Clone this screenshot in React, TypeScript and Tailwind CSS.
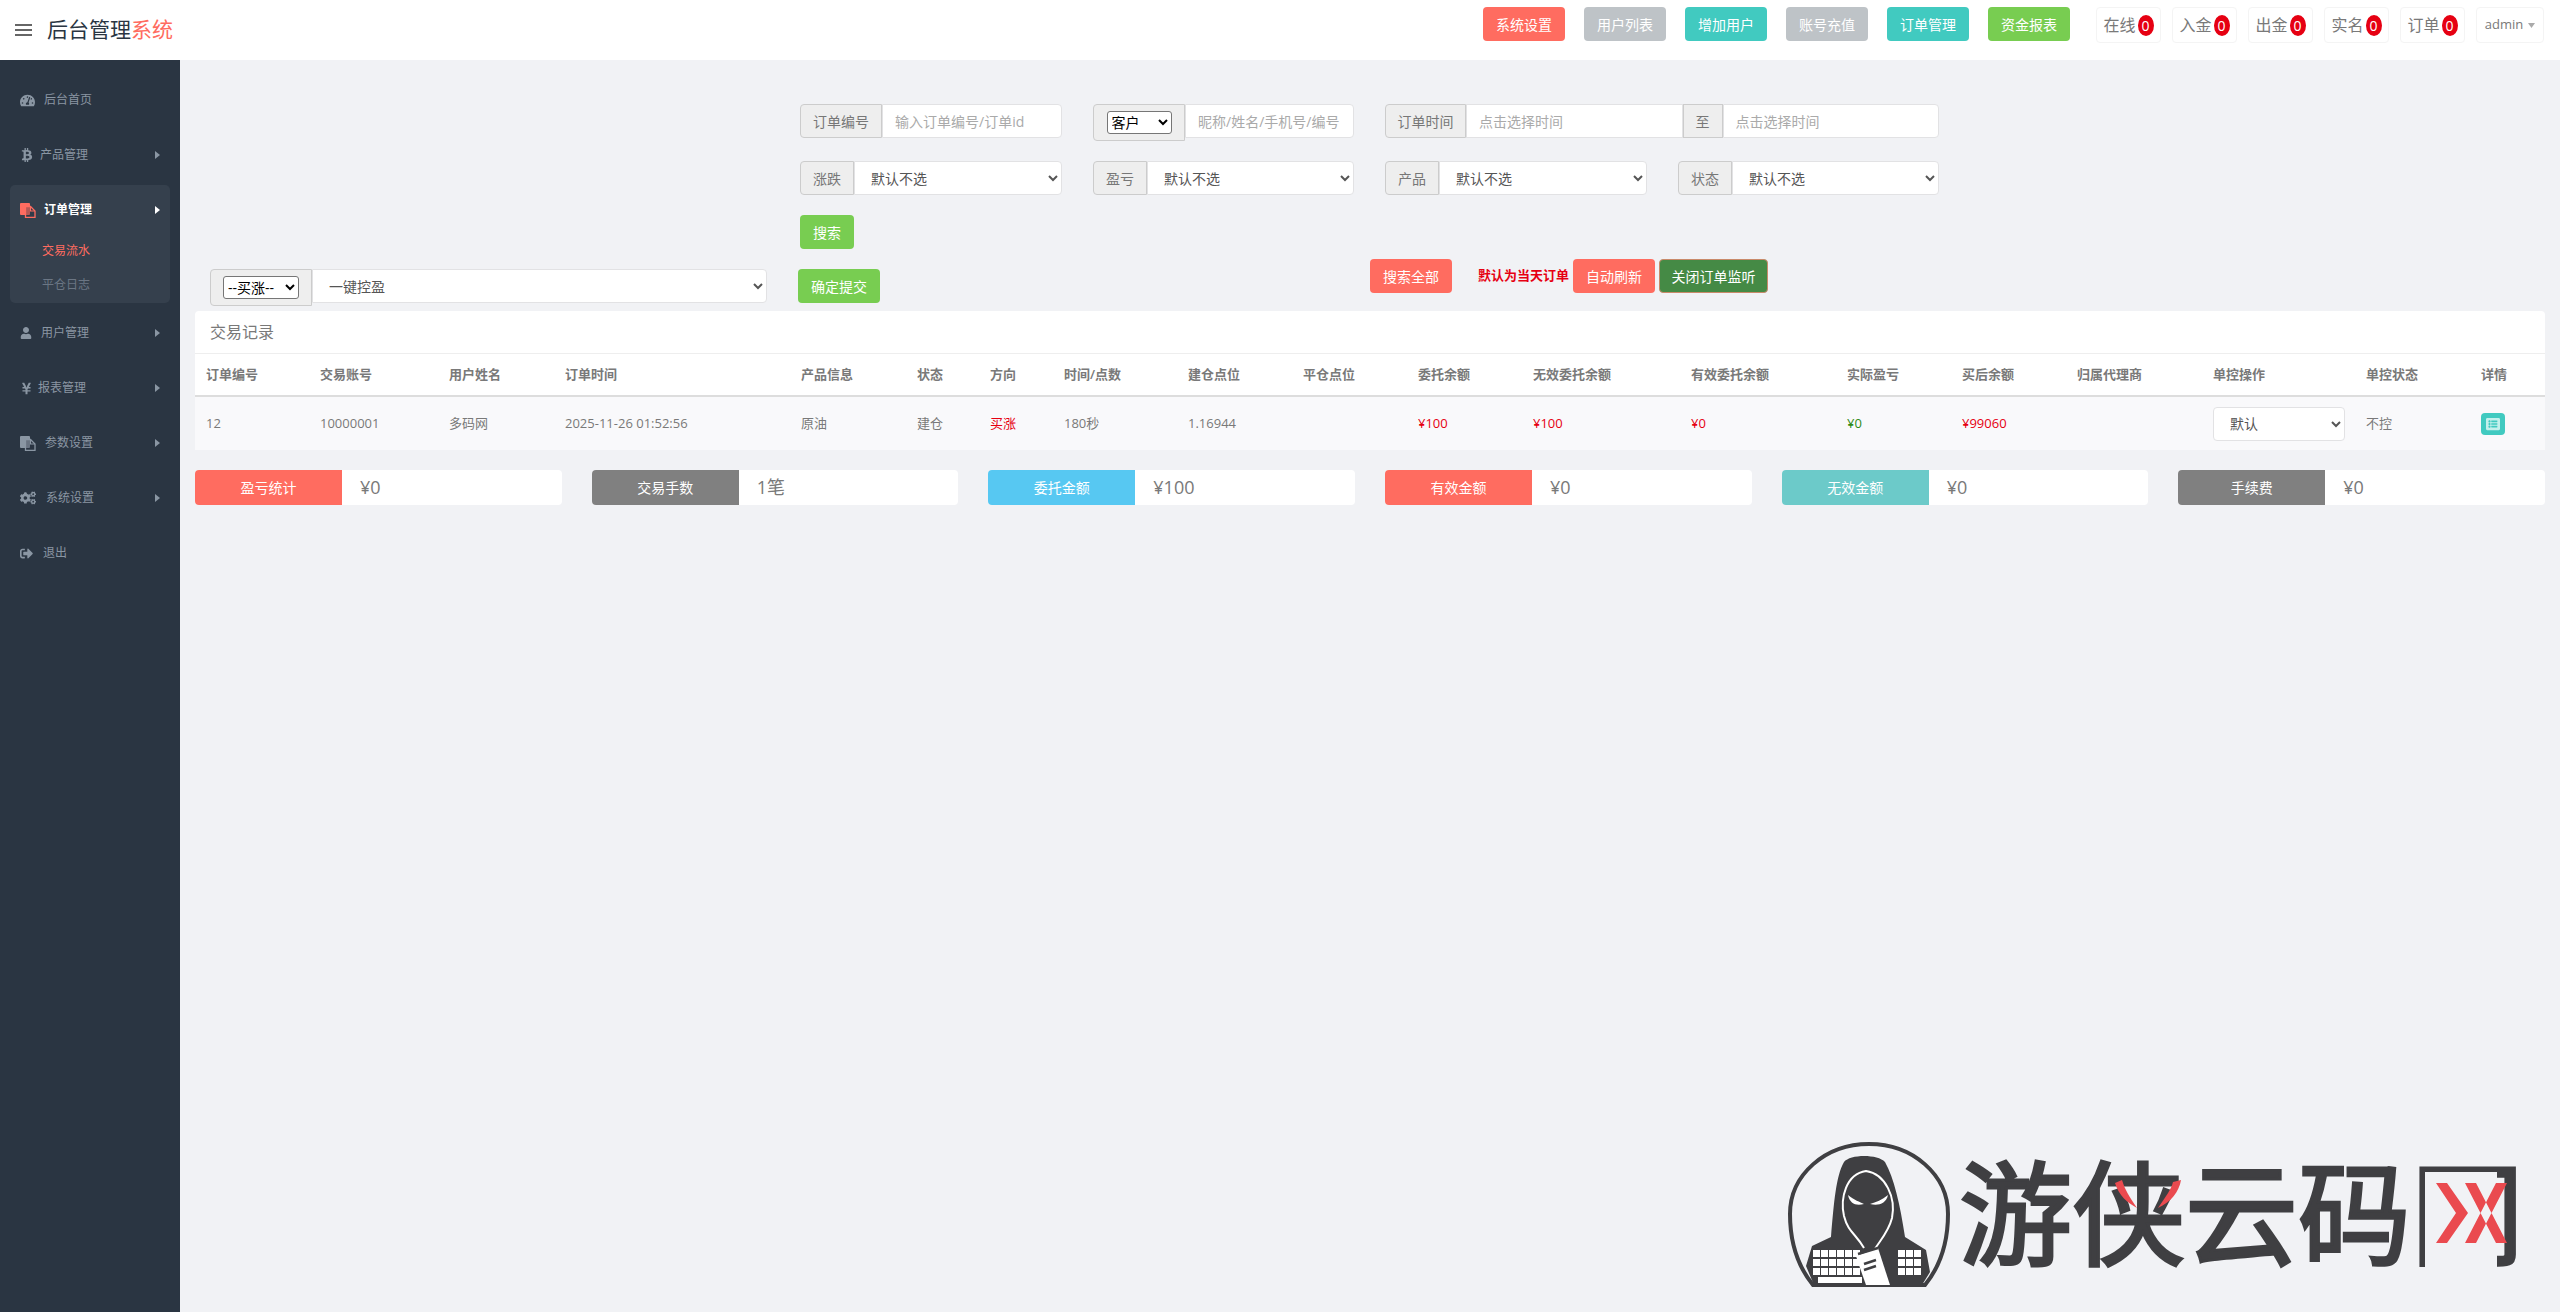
import type { ReactNode } from 'react';
import {
  FaTachometerAlt,
  FaBtc,
  FaUser,
  FaYenSign,
  FaCogs,
  FaSignOutAlt,
  FaListAlt,
} from 'react-icons/fa';

const topButtons = [
  { label: '系统设置', cls: 'bg-[#ff6c60]' },
  { label: '用户列表', cls: 'bg-[#bec3c7]' },
  { label: '增加用户', cls: 'bg-[#41cac0]' },
  { label: '账号充值', cls: 'bg-[#bec3c7]' },
  { label: '订单管理', cls: 'bg-[#41cac0]' },
  { label: '资金报表', cls: 'bg-[#78cd51]' },
];

const topStats = ['在线', '入金', '出金', '实名', '订单'];

const columns = [
  { label: '订单编号', w: 'w-[114px]', value: '12' },
  { label: '交易账号', w: 'w-[129px]', value: '10000001' },
  { label: '用户姓名', w: 'w-[116px]', value: '多码网' },
  { label: '订单时间', w: 'w-[236px]', value: '2025-11-26 01:52:56' },
  { label: '产品信息', w: 'w-[116px]', value: '原油' },
  { label: '状态', w: 'w-[73px]', value: '建仓' },
  { label: '方向', w: 'w-[74px]', value: '买涨', cls: 'text-[#e60012]' },
  { label: '时间/点数', w: 'w-[124px]', value: '180秒' },
  { label: '建仓点位', w: 'w-[115px]', value: '1.16944' },
  { label: '平仓点位', w: 'w-[115px]', value: '' },
  { label: '委托余额', w: 'w-[115px]', value: '¥100', cls: 'text-[#e60012]' },
  { label: '无效委托余额', w: 'w-[158px]', value: '¥100', cls: 'text-[#e60012]' },
  { label: '有效委托余额', w: 'w-[156px]', value: '¥0', cls: 'text-[#e60012]' },
  { label: '实际盈亏', w: 'w-[115px]', value: '¥0', cls: 'text-[#2e8b16]' },
  { label: '买后余额', w: 'w-[115px]', value: '¥99060', cls: 'text-[#e60012]' },
  { label: '归属代理商', w: 'w-[136px]', value: '' },
];

const summary = [
  { label: '盈亏统计', value: '¥0', cls: 'bg-[#ff6c60]' },
  { label: '交易手数', value: '1笔', cls: 'bg-[#808080]' },
  { label: '委托金额', value: '¥100', cls: 'bg-[#57c8f2]' },
  { label: '有效金额', value: '¥0', cls: 'bg-[#ff6c60]' },
  { label: '无效金额', value: '¥0', cls: 'bg-[#6ccac9]' },
  { label: '手续费', value: '¥0', cls: 'bg-[#808080]' },
];

function Caret({ active }: { active?: boolean }) {
  return (
    <svg width="5" height="8" viewBox="0 0 5 8" className="ml-auto mr-[10px]">
      <polygon points="0,0 5,4 0,8" fill={active ? '#ffffff' : '#8a96a3'} />
    </svg>
  );
}

// solid page behind an outlined page with a folded corner
function PagesIcon({ back, front }: { back: string; front: string }) {
  return (
    <svg width="16" height="15" viewBox="0 0 16 15">
      <rect x="0" y="0" width="10" height="12" rx="1" fill={back} />
      <path d="M5.5 3.5 H10.5 L15 8 V14.3 H5.5 Z" fill="#2a3542" fillOpacity="0.35" stroke={front} strokeWidth="1.3" />
      <path d="M10.5 3.5 V8 H15" fill="none" stroke={front} strokeWidth="1.1" />
    </svg>
  );
}

function NavItem({ icon, iconWidth, label, arrow = true }: { icon: ReactNode; iconWidth: string; label: string; arrow?: boolean }) {
  return (
    <div className="mx-[10px] flex h-[50px] items-center pl-[10px] text-[12px] text-[#8a96a3]">
      <span className={`${iconWidth} flex shrink-0 items-center`}>{icon}</span>
      <span>{label}</span>
      {arrow && <Caret />}
    </div>
  );
}

function Sidebar() {
  return (
    <aside className="flex w-[180px] shrink-0 flex-col gap-[5px] bg-[#2a3542] pt-[15px]">
      <NavItem icon={<FaTachometerAlt size={15} />} iconWidth="w-[24px]" label="后台首页" arrow={false} />
      <NavItem icon={<FaBtc size={14} />} iconWidth="w-[20px]" label="产品管理" />
      <div className="mx-[10px] h-[118px] rounded-[5px] bg-[#35404d]">
        <div className="flex h-[50px] items-center pl-[10px] text-[12px] font-bold text-white">
          <span className="flex w-[24px] shrink-0 items-center">
            <PagesIcon back="#ff6c60" front="#ff6c60" />
          </span>
          <span>订单管理</span>
          <Caret active />
        </div>
        <div className="-mt-[1px] flex h-[34px] items-center pl-[32px] text-[12px] text-[#ff6c60]">交易流水</div>
        <div className="flex h-[34px] items-center pl-[32px] text-[12px] text-[#6b7684]">平仓日志</div>
      </div>
      <NavItem icon={<FaUser size={12} />} iconWidth="w-[21px]" label="用户管理" />
      <NavItem icon={<FaYenSign size={13} />} iconWidth="w-[18px]" label="报表管理" />
      <NavItem icon={<PagesIcon back="#8a96a3" front="#8a96a3" />} iconWidth="w-[25px]" label="参数设置" />
      <NavItem icon={<FaCogs size={16} />} iconWidth="w-[26px]" label="系统设置" />
      <NavItem icon={<FaSignOutAlt size={13} />} iconWidth="w-[23px]" label="退出" arrow={false} />
    </aside>
  );
}

function TopBar() {
  return (
    <header className="flex h-[60px] shrink-0 items-start bg-white">
      <div className="flex h-[60px] items-center pl-[15px]">
        <div className="flex w-[17px] flex-col gap-[3px]">
          <span className="h-[2px] bg-[#666]" />
          <span className="h-[2px] bg-[#666]" />
          <span className="h-[2px] bg-[#666]" />
        </div>
        <div className="ml-[15px] text-[21px] text-[#2a3542]">
          后台管理<span className="text-[#ff6c60]">系统</span>
        </div>
      </div>
      <div className="ml-auto flex pr-[16px] pt-[7px]">
        <div className="flex gap-[19px]">
          {topButtons.map((b) => (
            <div key={b.label} className={`${b.cls} flex h-[34px] w-[82px] items-center justify-center rounded-[4px] text-[14px] text-white`}>
              {b.label}
            </div>
          ))}
        </div>
        <div className="ml-[26px] flex gap-[11px]">
          {topStats.map((s) => (
            <div key={s} className="flex h-[36px] w-[65px] items-center justify-center gap-[2px] rounded-[4px] border border-[#f4f4f4] text-[16px] text-[#797979]">
              {s}
              <span className="flex h-[21px] w-[16px] items-center justify-center rounded-[50%] bg-[#e60012] text-[14px] text-white">0</span>
            </div>
          ))}
          <div className="flex h-[36px] w-[68px] items-center justify-center gap-[5px] rounded-[4px] border border-[#f4f4f4] text-[13px] text-[#797979]">
            admin
            <svg width="7" height="5" viewBox="0 0 7 5">
              <polygon points="0,0 7,0 3.5,5" fill="#aaaaaa" />
            </svg>
          </div>
        </div>
      </div>
    </header>
  );
}

function Addon({ children, w }: { children: ReactNode; w: string }) {
  return (
    <span className={`${w} flex h-[34px] shrink-0 items-center justify-center rounded-l-[4px] border border-[#cccccc] bg-[#eeeeee] text-[14px] text-[#777777]`}>
      {children}
    </span>
  );
}

function TextField({ placeholder, last = true }: { placeholder: string; last?: boolean }) {
  return (
    <input
      placeholder={placeholder}
      className={`h-[34px] min-w-0 flex-1 border border-[#e2e2e4] bg-white pl-3 text-[14px] outline-none placeholder:text-[#aaaaaa] ${last ? 'rounded-r-[4px]' : ''}`}
    />
  );
}

function SelectGroup({ label, width }: { label: string; width: string }) {
  return (
    <div className={`${width} flex`}>
      <Addon w="w-[54px]">{label}</Addon>
      <select className="h-[34px] min-w-0 flex-1 rounded-r-[4px] border border-[#e2e2e4] bg-white pl-3 text-[14px] text-[#555555]">
        <option>默认不选</option>
      </select>
    </div>
  );
}

function Filters() {
  return (
    <div className="ml-[620px] w-[1139px]">
      <div className="flex h-[34px] items-start gap-[31px]">
        <div className="flex w-[262px]">
          <Addon w="w-[82px]">订单编号</Addon>
          <TextField placeholder="输入订单编号/订单id" />
        </div>
        <div className="flex w-[261px] items-start">
          <span className="flex h-[37px] w-[92px] shrink-0 items-center justify-center rounded-l-[4px] border border-[#cccccc] bg-[#eeeeee]">
            <select className="h-[23px] w-[65px] rounded-[3px] border border-[#767676] bg-white text-[14px] text-black">
              <option>客户</option>
            </select>
          </span>
          <TextField placeholder="昵称/姓名/手机号/编号" />
        </div>
        <div className="flex w-[554px]">
          <Addon w="w-[81px]">订单时间</Addon>
          <TextField placeholder="点击选择时间" last={false} />
          <Addon w="w-[40px] rounded-l-none">至</Addon>
          <TextField placeholder="点击选择时间" />
        </div>
      </div>
      <div className="mt-[23px] flex gap-[31px]">
        <SelectGroup label="涨跌" width="w-[262px]" />
        <SelectGroup label="盈亏" width="w-[261px]" />
        <SelectGroup label="产品" width="w-[262px]" />
        <SelectGroup label="状态" width="w-[261px]" />
      </div>
      <div className="mt-[20px] flex h-[34px] w-[54px] items-center justify-center rounded-[4px] bg-[#78cd51] text-[14px] text-white">搜索</div>
    </div>
  );
}

function ActionRow() {
  return (
    <div className="flex h-[62px] items-start pl-[30px] pt-[20px]">
      <div className="flex w-[557px] items-start">
        <span className="flex h-[37px] w-[102px] shrink-0 items-center justify-center rounded-l-[4px] border border-[#cccccc] bg-[#eeeeee]">
          <select className="h-[23px] w-[76px] rounded-[3px] border border-[#767676] bg-white text-[14px] text-black">
            <option>--买涨--</option>
          </select>
        </span>
        <select className="h-[34px] min-w-0 flex-1 rounded-r-[4px] border border-[#e2e2e4] bg-white pl-3 text-[14px] text-[#555555]">
          <option>一键控盈</option>
        </select>
      </div>
      <div className="ml-[31px] flex h-[34px] w-[82px] items-center justify-center rounded-[4px] bg-[#78cd51] text-[14px] text-white">确定提交</div>
      <div className="-mt-[10px] ml-[490px] flex h-[34px] w-[82px] items-center justify-center rounded-[4px] bg-[#ff6c60] text-[14px] text-white">搜索全部</div>
      <div className="-mt-[10px] ml-[26px] flex h-[34px] items-center text-[13px] font-bold text-[#e60012]">默认为当天订单</div>
      <div className="-mt-[10px] ml-[4px] flex h-[34px] w-[82px] items-center justify-center rounded-[4px] bg-[#ff6c60] text-[14px] text-white">自动刷新</div>
      <div className="-mt-[10px] ml-[4px] flex h-[34px] w-[109px] items-center justify-center rounded-[4px] border border-[#c98a6a] bg-[#458a45] text-[14px] text-white">关闭订单监听</div>
    </div>
  );
}

function Records() {
  return (
    <section className="mx-[15px] rounded-[4px] bg-white">
      <div className="flex h-[43px] items-center border-b border-[#eeeeee] pl-[15px] text-[16px] text-[#797979]">交易记录</div>
      <table className="w-[2350px] table-fixed border-collapse text-left text-[13px] text-[#797979]">
        <thead>
          <tr className="h-[42px] border-b-2 border-[#dddddd]">
            {columns.map((c) => (
              <th key={c.label} className={`${c.w} whitespace-nowrap pl-[11px] font-semibold`}>{c.label}</th>
            ))}
            <th className="w-[153px] pl-[11px] font-semibold">单控操作</th>
            <th className="w-[115px] pl-[11px] font-semibold">单控状态</th>
            <th className="w-[75px] pl-[11px] font-semibold">详情</th>
          </tr>
        </thead>
        <tbody>
          <tr className="h-[54px] bg-[#f9f9fb]">
            {columns.map((c) => (
              <td key={c.label} className={`whitespace-nowrap pl-[11px] ${c.cls ?? ''}`}>{c.value}</td>
            ))}
            <td className="pl-[11px]">
              <select className="h-[34px] w-[132px] rounded-[4px] border border-[#e2e2e4] bg-white pl-3 text-[14px] text-[#555555]">
                <option>默认</option>
              </select>
            </td>
            <td className="pl-[11px]">不控</td>
            <td className="pl-[11px]">
              <span className="flex h-[22px] w-[24px] items-center justify-center rounded-[4px] bg-[#41cac0] text-[#c4f0ec]">
                <FaListAlt size={14} />
              </span>
            </td>
          </tr>
        </tbody>
      </table>
    </section>
  );
}

function Summary() {
  return (
    <div className="mx-[15px] mt-[20px] grid grid-cols-6 gap-[30px]">
      {summary.map((s) => (
        <div key={s.label} className="flex h-[35px] rounded-[4px] bg-white">
          <div className={`${s.cls} flex w-[147px] items-center justify-center rounded-l-[4px] text-[14px] text-white`}>{s.label}</div>
          <div className="flex items-center pl-[18px] text-[18px] text-[#797979]">{s.value}</div>
        </div>
      ))}
    </div>
  );
}

function Watermark() {
  return (
    <div className="absolute left-[1608px] top-[1082px] flex items-start">
      <svg width="166" height="146" viewBox="0 0 166 146" className="shrink-0">
        <path d="M25 143 C8 122 2 98 2 72 C2 33 37 2 81 2 C125 2 160 33 160 72 C160 98 154 122 137 143 Z" fill="none" stroke="#3f3f42" strokeWidth="4" />
        <path d="M43 95 C46 60 48 34 56 20 C62 12 90 12 97 20 C106 36 112 62 117 95 L138 108 L142 130 L134 143 L26 143 L18 124 L24 104 Z" fill="#3f3f42" />
        <path d="M56 74 C52 56 58 32 78 29 C98 32 108 56 104 76 C100 92 90 100 84 112 M56 74 C60 90 68 92 76 106" fill="none" stroke="#ffffff" strokeWidth="2" />
        <path d="M60 53 C66 58 72 60 76 62 C68 64 62 62 60 53 Z M100 53 C94 58 88 60 82 62 C90 64 98 62 100 53 Z" fill="#ffffff" />
        <g fill="#ffffff">
          {[0, 1, 2].map((r) =>
            [25, 33, 41, 49, 57, 65, 110, 118, 126].map((x) => (
              <rect key={`${r}-${x}`} x={x} y={108 + r * 9} width="7" height="7" />
            )),
          )}
          <rect x="30" y="135" width="44" height="6" />
          <path d="M68 114 L90 106 L102 143 L78 143 L72 126 Z" />
        </g>
        <path d="M70 112 L90 106 M76 122 L88 118 M76 128 L88 124" stroke="#3f3f42" strokeWidth="2.5" />
      </svg>
      <div className="relative ml-[5px] mt-[8px] h-[115px] w-[566px] whitespace-nowrap font-['Noto_Sans_CJK_SC',sans-serif] text-[113px] font-normal leading-[115px] text-[#3f3f42] [-webkit-text-stroke:3px_#3f3f42]">
        游侠云码网
        <svg width="566" height="125" viewBox="0 0 566 125" className="absolute left-0 top-0">
          <path d="M156 33 C160 46 168 52 178 58 C170 46 166 40 163 30 Z M222 30 C220 42 212 52 199 58 C207 46 212 40 214 32 Z" fill="#ea4a4f" />
          <rect x="466" y="22" width="72" height="100" fill="#f1f2f5" />
          <path d="M477 33 H488 L509 63 L488 93 H477 L497 63 Z M506 33 H517 L548 93 H537 Z M548 33 H537 L506 93 H517 Z" fill="#ea4a4f" />
        </svg>
      </div>
    </div>
  );
}

export default function App() {
  return (
    <div className="flex h-screen flex-col overflow-hidden font-['Open_Sans','Noto_Sans_CJK_SC',sans-serif]">
      <TopBar />
      <div className="flex min-h-0 flex-1">
        <Sidebar />
        <main className="relative min-w-0 flex-1 bg-[#f1f2f5] pt-[44px]">
          <Filters />
          <ActionRow />
          <Records />
          <Summary />
          <Watermark />
        </main>
      </div>
    </div>
  );
}
